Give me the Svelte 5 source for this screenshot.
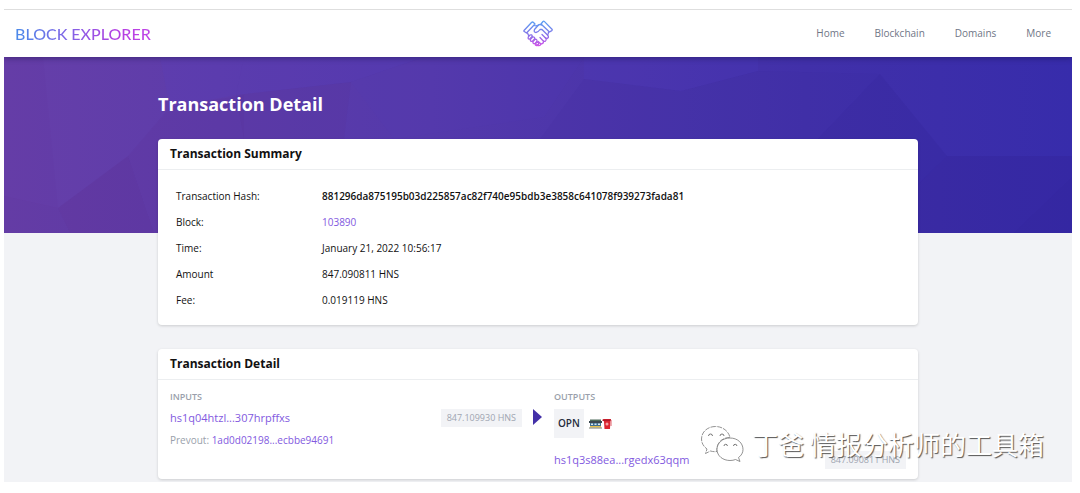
<script lang="ts">
    const navItems = ['Home', 'Blockchain', 'Domains', 'More'];

    const summary = [
        { label: 'Transaction Hash:', value: '881296da875195b03d225857ac82f740e95bdb3e3858c641078f939273fada81', kind: 'hash' },
        { label: 'Block:', value: '103890', kind: 'link' },
        { label: 'Time:', value: 'January 21, 2022 10:56:17', kind: 'text' },
        { label: 'Amount', value: '847.090811 HNS', kind: 'text' },
        { label: 'Fee:', value: '0.019119 HNS', kind: 'text' }
    ];
</script>

<div class="page">
    <header class="navbar">
        <a class="brand" href="#home"><span>BLOCK EXPLORER</span></a>
        <a class="logo" href="#home" aria-label="Handshake">
            <svg viewBox="0 0 30 28" width="30" height="28" aria-hidden="true">
                <defs>
                    <linearGradient id="shake" gradientUnits="userSpaceOnUse" x1="0" y1="2" x2="0" y2="27">
                        <stop offset="0" stop-color="#5a9cf2" />
                        <stop offset="0.5" stop-color="#8474e8" />
                        <stop offset="1" stop-color="#d650e8" />
                    </linearGradient>
                </defs>
                <g fill="none" stroke="url(#shake)" stroke-width="1.3" stroke-linejoin="round" stroke-linecap="round">
                    <path d="M1 10.500 L8.500 2.500 Q9.500 1.500 10.500 2.500 L12 4 L3.500 13 L1.300 11.500 Q.5 11 1 10.500Z" />
                    <path d="M18 4 L20 1.500 Q20.700 .8 21.500 1.600 L29 9.200 Q29.500 10 28.800 10.600 L26.500 12 Z" />
                    <path d="M11 5.500 Q13.500 6.500 15.500 5 Q17 4 18.500 5" />
                    <path d="M15.500 5 L11.500 9.500 Q10.500 12.500 13 12.500 Q15 12.500 17 9.500 L19 9.500 L25 15.500 Q26 17.500 24.500 18.300 Q23.300 18.800 22.300 17.800" />
                    <path d="M19 14.500 L23 18.500 Q23.800 20.500 22.300 21.300 Q21 21.800 19.800 20.500 L17 17.500" />
                    <path d="M20.500 21.200 Q20.500 23.800 18.300 23.800 Q17.300 23.800 15.200 21.500" />
                    <path d="M18 24 Q17.200 26 15.300 25.500 L13.600 24.200" />
                    <path d="M4.500 13 L5.800 16 M25.500 12 Q25.500 14 24.500 15" />
                    <path d="M5.500 16.500 L7 15 Q9 14.200 9.300 16.300 L6.800 19 Q4.300 19.500 5.500 16.500Z" />
                    <path d="M7.500 19.200 L9.500 17 Q11.700 16.500 11.800 18.700 L9.500 21.300 Q6.800 21.800 7.500 19.200Z" />
                    <path d="M10 21.500 L12 19.300 Q14.200 19 14 21.300 L12 23.600 Q9.500 24 10 21.500Z" />
                    <path d="M12.300 23.800 L14 22 Q16 22 15.500 24.200 L14.300 25.500 Q12 26 12.300 23.800Z" />
                </g>
            </svg>
        </a>
        <nav>
            {#each navItems as item}
                <a href="#{item.toLowerCase()}">{item}</a>
            {/each}
        </nav>
    </header>

    <main>
        <svg class="hero" viewBox="0 0 1068 176" preserveAspectRatio="none" aria-hidden="true">
            <defs>
                <linearGradient id="hero-fill" x1="0" x2="1" y1="0" y2="0">
                    <stop offset="0" stop-color="#663fa9" />
                    <stop offset="0.4" stop-color="#5439ab" />
                    <stop offset="0.75" stop-color="#4130a9" />
                    <stop offset="1" stop-color="#372cab" />
                </linearGradient>
            </defs>
            <rect width="1068" height="176" fill="url(#hero-fill)" />
            <g fill="#5b2a86" fill-opacity="0.1">
                <path d="M0 139 L54 151 L66 176 L0 176Z" />
                <path d="M54 151 L124 99 L150 176 L66 176Z" fill-opacity="0.2" />
                <path d="M124 99 L166 50 L240 38 L240 176 L150 176Z" />
                <path d="M39 0 L54 151 L0 139 L0 0Z" fill-opacity="0.05" />
                <path d="M232 38 L347 25 L340 82 L240 82Z" />
            </g>
            <g fill="#2d1a80" fill-opacity="0.06">
                <path d="M536 82 L580 22 L677 34 L754 14 L876 17 L814 82Z" />
                <path d="M814 82 L876 17 L943 99 L900 141 L900 176 L814 176Z" fill-opacity="0.12" />
                <path d="M900 141 L943 99 L1068 99 L1068 176 L900 176Z" fill-opacity="0.16" />
                <path d="M1068 120 L1010 176 L1068 176Z" />
            </g>
            <g fill="#5145d0" fill-opacity="0.12">
                <path d="M156 0 L240 0 L232 38 L166 50Z" />
                <path d="M240 0 L420 0 L347 25 L232 38Z" />
                <path d="M347 25 L420 0 L580 0 L540 60 L390 82Z" fill-opacity="0.06" />
                <path d="M580 0 L754 0 L754 14 L677 34 L580 22Z" />
            </g>
        </svg>

        <div class="container">
            <h1>Transaction Detail</h1>

            <section class="card">
                <h2>Transaction Summary</h2>
                <dl>
                    {#each summary as row}
                        <div class="row">
                            <dt>{row.label}</dt>
                            <dd class:hash={row.kind === 'hash'}>
                                {#if row.kind === 'link'}
                                    <a href="#block">{row.value}</a>
                                {:else}
                                    {row.value}
                                {/if}
                            </dd>
                        </div>
                    {/each}
                </dl>
            </section>

            <section class="card">
                <h2>Transaction Detail</h2>
                <div class="transfer">
                    <div class="side">
                        <h3>INPUTS</h3>
                        <div class="line">
                            <a class="address" href="#input">hs1q04htzl...307hrpffxs</a>
                            <span class="amount">847.109930 HNS</span>
                        </div>
                        <p class="prevout">Prevout: <a href="#prevout">1ad0d02198...ecbbe94691</a></p>
                    </div>
                    <svg class="arrow" viewBox="0 0 10 16" width="10" height="16" aria-hidden="true">
                        <path d="M1 0 L10 8 L1 16Z" fill="#4330a8" />
                    </svg>
                    <div class="side">
                        <h3>OUTPUTS</h3>
                        <div class="covenant">
                            <span class="action">OPN</span>
                            <svg viewBox="0 0 24 12" width="24" height="12" role="img" aria-label="Name">
                                <path d="M1 1.500H12V3H1Z" fill="#4e6b5a" />
                                <path d="M0 3H13V5H0Z" fill="#39474f" />
                                <path d="M1 5H12V8H1Z" fill="#3e6f92" />
                                <path d="M2 5.500H4V7H2ZM5.500 5.500H7.500V7H5.500ZM9 5.500H11V7H9Z" fill="#d8e8ef" />
                                <path d="M1 8H12V9.500H1Z" fill="#e4c04c" />
                                <path d="M0 9.500H13V10.500H0Z" fill="#747b70" />
                                <path d="M14 1H22L21.300 4L21 11H15.500L15 4Z" fill="#dc2430" />
                                <path d="M13.500 1.500H22V3H13.500Z" fill="#b01828" />
                                <path d="M22 2V8" stroke="#e0616a" fill="none" />
                                <circle cx="18" cy="6" r="1.500" fill="#f5a2a4" />
                            </svg>
                        </div>
                        <div class="line">
                            <a class="address" href="#output">hs1q3s88ea...rgedx63qqm</a>
                            <span class="amount">847.090811 HNS</span>
                        </div>
                    </div>
                </div>
            </section>
        </div>

        <div class="watermark">
            <svg viewBox="0 0 44 38" width="44" height="38" aria-hidden="true">
                <g fill="#fff" stroke="#777" stroke-width="0.8" stroke-linejoin="round">
                    <path stroke-dasharray="5 1" d="M15.500 1.500C7.500 1.500 1.500 7 1.500 14C1.500 18 3.500 21.500 7 24L5.500 28.500L10.500 26C12.500 26.600 15 26.900 17 26.500C16 18 22 12.500 30 12.500C28.500 6 22.500 1.500 15.500 1.500Z" />
                    <path d="M30 13C22.500 13 17 18 17 24.500C17 31 23 35.500 30 35.500C32 35.500 34 35.200 35.500 34.500L40 36.500L38.500 32.500C41.500 30.500 43 27.500 43 24.500C43 18 37.500 13 30 13Z" />
                </g>
                <g fill="none" stroke="#777">
                    <path d="M8.500 11A2 2 0 0 1 12.500 11M20 11A2 2 0 0 1 24 11M24 21A1.700 1.700 0 0 1 27.400 21M33.500 21A1.700 1.700 0 0 1 36.900 21" />
                </g>
            </svg>
            <span>丁爸 情报分析师的工具箱</span>
        </div>
    </main>
</div>

<style>
    :global(body) {
        background: #fff;
    }

    .page {
        padding: 9px 8px 0 4px;
        font-family: 'Open Sans', 'Noto Sans', sans-serif;
        font-size: 10px;
        line-height: 17px;
        color: #111;
    }

    a {
        color: #8259e0;
        text-decoration: none;
    }

    .navbar {
        position: relative;
        z-index: 1;
        display: grid;
        grid-template-columns: 1fr auto 1fr;
        align-items: center;
        height: 47px;
        padding: 0 11px;
        border-top: 1px solid #dedede;
        background: #fff;
        box-shadow: 0 1px 6px rgba(20, 10, 60, 0.45);
        clip-path: inset(0 0 -10px 0);
    }

    .brand {
        font-family: Lato, sans-serif;
        font-size: 16px;
        font-weight: 500;
        line-height: 20px;
    }

    .brand span {
        background: linear-gradient(to right, #4b8bea, #b340e2 75%, #c044e6);
        background-clip: text;
        color: transparent;
    }

    .logo {
        display: flex;
    }

    nav {
        display: flex;
        justify-content: flex-end;
        gap: 30px;
        padding-right: 10px;
    }

    nav a {
        color: #6f7686;
    }

    main {
        position: relative;
        padding-bottom: 3px;
        background: #f2f3f6;
    }

    .hero {
        position: absolute;
        top: 0;
        left: 0;
        width: 100%;
        height: 176px;
    }

    .container {
        position: relative;
        max-width: 760px;
        margin: 0 auto;
    }

    h1,
    h2,
    h3,
    p,
    dl,
    dd {
        margin: 0;
    }

    h1 {
        padding: 34px 0 22px;
        font-size: 18px;
        line-height: 26px;
        font-weight: 700;
        color: #fff;
    }

    .card {
        background: #fff;
        border-radius: 4px;
        box-shadow: 0 1px 3px rgba(0, 0, 0, 0.16);
    }

    .card + .card {
        margin-top: 24px;
    }

    h2 {
        padding: 6px 12px;
        border-bottom: 1px solid #eceef0;
        font-size: 12px;
        line-height: 18px;
        font-weight: 700;
    }

    dl {
        padding: 13px 18px 12px;
    }

    .row {
        display: flex;
        line-height: 26px;
    }

    dt {
        width: 146px;
    }

    .hash {
        font-weight: 600;
    }

    .transfer {
        display: flex;
        align-items: flex-start;
        padding: 8px 12px 10px;
    }

    .side {
        flex: 1;
    }

    h3 {
        margin-bottom: 4px;
        font-size: 9px;
        line-height: 17px;
        font-weight: 600;
        color: #9a9fab;
    }

    .line {
        display: flex;
        justify-content: space-between;
        align-items: center;
        line-height: 18px;
    }

    .address {
        font-size: 11px;
    }

    .amount {
        padding: 0 6px;
        background: #f2f3f6;
        font-size: 9px;
        color: #a0a5b1;
    }

    .prevout {
        margin-top: 3px;
        line-height: 20px;
        color: #9a9fab;
    }

    .arrow {
        margin: 21px 12px 0 10px;
    }

    .covenant {
        display: flex;
        align-items: center;
        gap: 5px;
        margin-bottom: 13px;
    }

    .action {
        padding: 0 4px;
        background: #f2f3f6;
        font-weight: 600;
        line-height: 29px;
        color: #252b3b;
    }

    .watermark {
        position: absolute;
        right: 28px;
        bottom: 19px;
        display: flex;
        align-items: center;
        gap: 8px;
        font-family: 'Noto Sans CJK SC', sans-serif;
        font-size: 26px;
        font-weight: 400;
        line-height: 38px;
        color: #fff;
        text-shadow: 1px 1px 1px #555;
        white-space: nowrap;
    }
</style>
